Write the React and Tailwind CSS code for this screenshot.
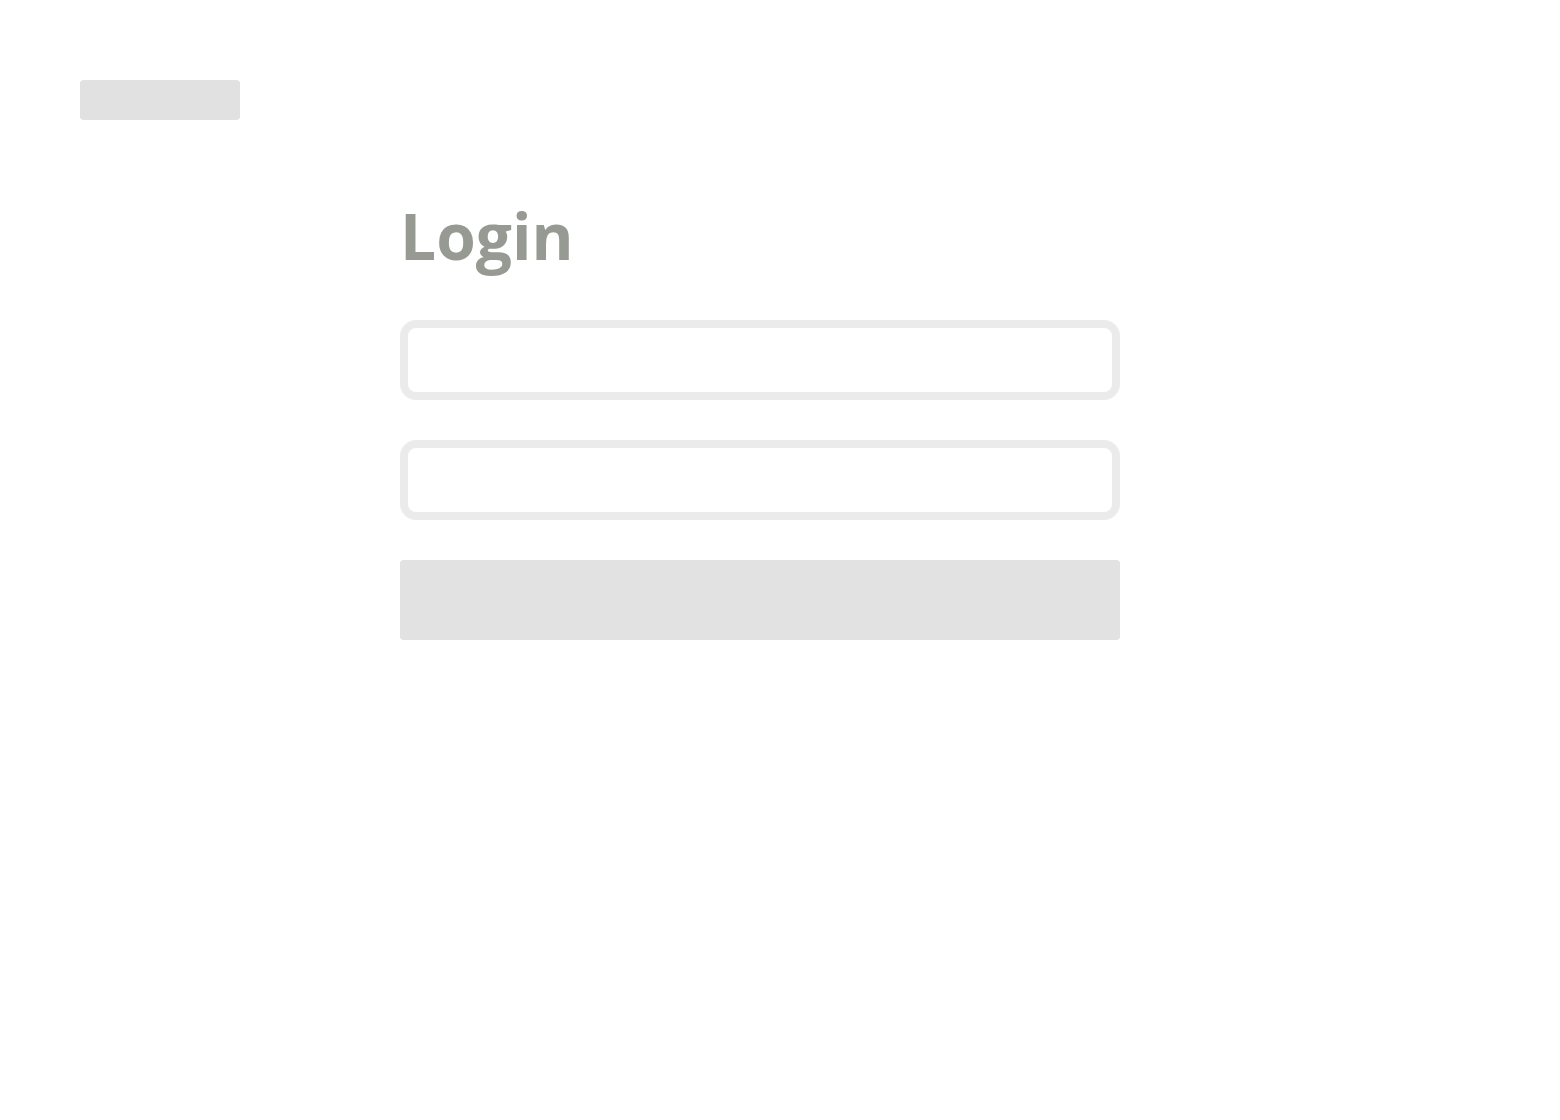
export default function App() {
  return (
    <div className="min-h-screen bg-white p-20" style={{ fontFamily: '"Open Sans", "Noto Sans", sans-serif' }}>
      <div className="h-10 w-40 rounded bg-[#e1e1e1]" />

      <div className="ml-80 mt-20 w-[720px]">
        <h1 className="mb-12 text-[64px] font-bold leading-[72px] text-[#979a93]">Login</h1>

        <div className="flex flex-col gap-10">
          <div className="h-20 rounded-2xl border-8 border-[#ebebeb] bg-white" />
          <div className="h-20 rounded-2xl border-8 border-[#ebebeb] bg-white" />
          <div className="h-20 rounded bg-[#e2e2e2]" />
        </div>
      </div>
    </div>
  )
}
